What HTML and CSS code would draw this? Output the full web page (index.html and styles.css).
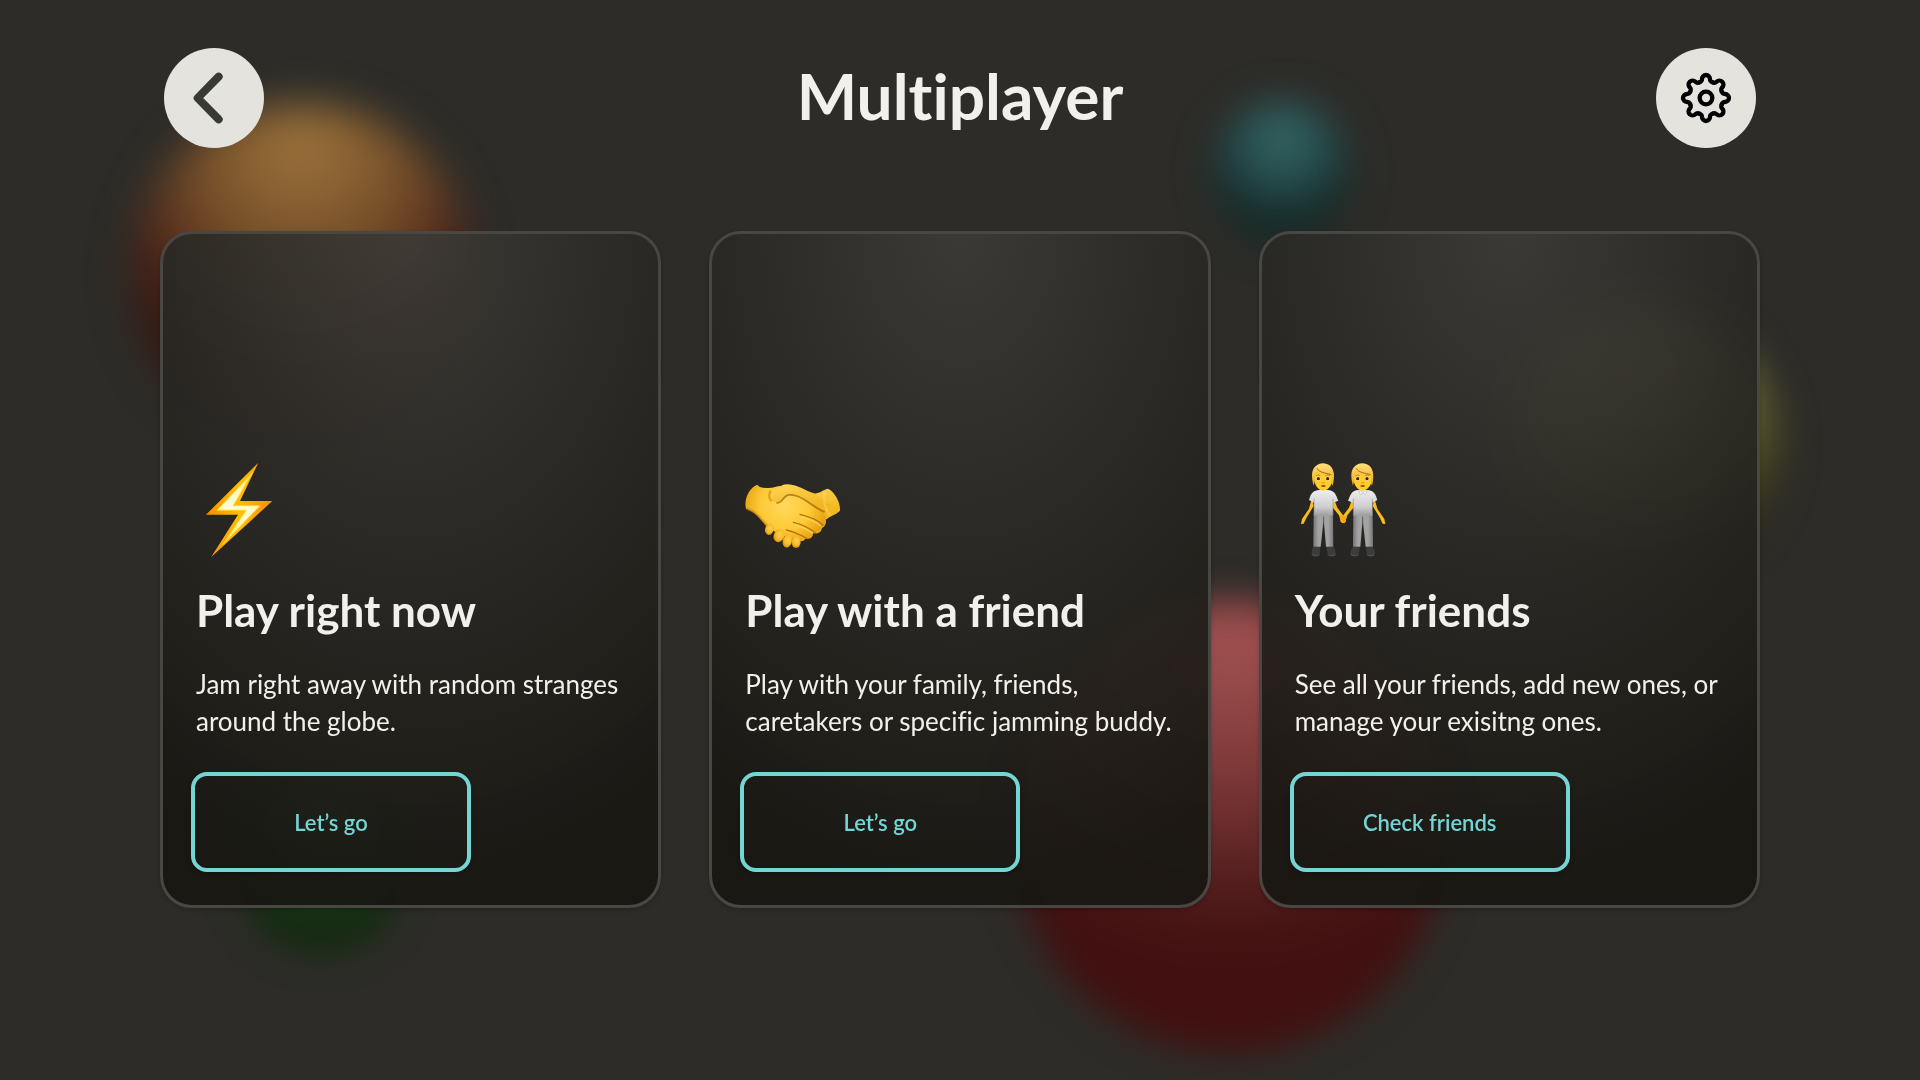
FILE: index.html
```html
<!DOCTYPE html>
<html lang="en">
<head>
<meta charset="utf-8">
<meta name="viewport" content="width=device-width, initial-scale=1">
<title>Multiplayer</title>
<link rel="stylesheet" href="styles.css">
</head>
<body>
<div class="backdrop" aria-hidden="true">
  <span class="orb orb-orange"></span>
  <span class="orb orb-teal"></span>
  <span class="orb orb-olive"></span>
  <span class="orb orb-green"></span>
  <span class="orb orb-red"></span>
</div>

<div class="page">
  <header class="topbar">
    <button class="round-button" type="button" aria-label="Back">
      <svg viewBox="0 0 300 300" aria-hidden="true"><path d="M164 86 101 150 164 214" fill="none" stroke="#3a3a35" stroke-width="24" stroke-linecap="round" stroke-linejoin="round"/></svg>
    </button>
    <h1 class="page-title">Multiplayer</h1>
    <button class="round-button" type="button" aria-label="Settings">
      <svg viewBox="-150 -150 300 300" aria-hidden="true">
        <defs><path id="tooth" d="M-19.500-47.100C-13-49.800-12-51-12-57A12 12 0 0 1 12-57C12-51 13-49.800 19.500-47.100"/></defs>
        <g fill="none" stroke="#000" stroke-width="13" stroke-linecap="round">
          <use href="#tooth"/><use href="#tooth" transform="rotate(45)"/><use href="#tooth" transform="rotate(90)"/><use href="#tooth" transform="rotate(135)"/>
          <use href="#tooth" transform="rotate(180)"/><use href="#tooth" transform="rotate(225)"/><use href="#tooth" transform="rotate(270)"/><use href="#tooth" transform="rotate(315)"/>
          <circle r="19"/>
        </g>
      </svg>
    </button>
  </header>

  <main class="cards">
    <section class="card">
      <svg class="card-icon" viewBox="18 36 288 288" aria-hidden="true">
        <defs>
          <linearGradient id="bolt" x1="0" x2="1"><stop offset="0" stop-color="#ff8a00"/><stop offset=".5" stop-color="#ffbd08"/><stop offset="1" stop-color="#ff8d08"/></linearGradient>
          <linearGradient id="bolt-core" x1="0" y1="0" x2="0" y2="1"><stop offset="0" stop-color="#ffe24a"/><stop offset=".35" stop-color="#fffbd8"/><stop offset=".7" stop-color="#fff9c4"/><stop offset="1" stop-color="#ffd92e"/></linearGradient>
        </defs>
        <path d="M205 38 48 194H144L63 322 247 153H150Z" fill="url(#bolt)"/>
        <path d="M188 67 81 181H168L98 284 210 167H130Z" fill="url(#bolt-core)" stroke="#ffd51f" stroke-width="3"/>
      </svg>
      <h2 class="card-title">Play right now</h2>
      <p class="card-text">Jam right away with random stranges around the globe.</p>
      <button class="action" type="button">Let’s go</button>
    </section>

    <section class="card">
      <svg class="card-icon" viewBox="45 -24 288 288" aria-hidden="true">
        <defs>
          <radialGradient id="palm" gradientUnits="userSpaceOnUse" cx="165" cy="105" r="125"><stop offset="0" stop-color="#ffd95c"/><stop offset=".6" stop-color="#fdc936"/><stop offset="1" stop-color="#e6a313"/></radialGradient>
          <linearGradient id="wrist" x1="0" y1="0" x2=".4" y2="1"><stop offset="0" stop-color="#ffd65a"/><stop offset="1" stop-color="#f2b51c"/></linearGradient>
          <radialGradient id="tip" cx=".55" cy=".4" r=".65"><stop offset="0" stop-color="#ffd14a"/><stop offset=".6" stop-color="#f6b92a"/><stop offset="1" stop-color="#c97f08"/></radialGradient>
          <filter id="soft"><feGaussianBlur stdDeviation="2"/></filter>
        </defs>
        <path d="M130 53C148 46 170 48 190 49L250 71C268 71 280 59 293 56C313 62 333 100 330 122C316 136 302 136 290 148L250 150Z" fill="url(#wrist)"/>
        <path d="M82 44C90 55 104 56 142 51L180 44 240 88 282 132C292 148 290 168 276 174C274 188 262 193 249 190C250 204 238 209 226 206C220 216 212 214 205 211L150 195 112 171C92 150 82 128 48 116C41 92 56 52 82 44Z" fill="url(#palm)"/>
        <path d="M50 116C82 126 92 148 114 169M122 62C116 72 116 82 124 94" fill="none" stroke="#b87308" stroke-width="7" opacity=".45" filter="url(#soft)"/>
        <ellipse cx="118" cy="178" rx="13" ry="17" fill="url(#tip)" transform="rotate(12 118 178)"/>
        <ellipse cx="147" cy="197" rx="16" ry="20" fill="url(#tip)" transform="rotate(25 147 197)"/>
        <ellipse cx="172" cy="213" rx="14" ry="20" fill="url(#tip)" transform="rotate(12 172 213)"/>
        <ellipse cx="198" cy="216" rx="14" ry="18" fill="url(#tip)"/>
        <path d="M139 98C158 101 160 76 176 74C216 72 238 106 284 126" fill="none" stroke="#9c5c00" stroke-width="6" opacity=".65" filter="url(#soft)"/>
        <path d="M252 70C226 64 206 44 172 43C145 43 147 62 132 76C122 86 124 96 139 97C158 95 156 76 171 72C204 64 244 102 282 120L302 105Z" fill="url(#wrist)"/>
        <path d="M210 133C236 141 260 146 279 166M190 157C218 164 238 174 256 188M169 180C194 185 212 196 231 205" fill="none" stroke="#b77506" stroke-width="4" stroke-linecap="round"/>
        <path d="M212 139C238 148 257 153 272 168M194 164C218 171 234 180 249 190" fill="none" stroke="#ffdb69" stroke-width="4" opacity=".7"/>
        <path d="M284 66C278 86 284 116 300 136" fill="none" stroke="#ffe07a" stroke-width="8" opacity=".35" filter="url(#soft)"/>
      </svg>
      <h2 class="card-title">Play with a friend</h2>
      <p class="card-text">Play with your family, friends, caretakers or specific jamming buddy.</p>
      <button class="action" type="button">Let’s go</button>
    </section>

    <section class="card">
      <svg class="card-icon" viewBox="42 48 288 288" aria-hidden="true">
        <defs>
          <linearGradient id="shirt" x1="0" y1="0" x2="0" y2="1"><stop offset="0" stop-color="#eeeeef"/><stop offset=".65" stop-color="#cfcfd1"/><stop offset="1" stop-color="#9e9e9f"/></linearGradient>
          <linearGradient id="trousers" x1="0" x2="1"><stop offset="0" stop-color="#777"/><stop offset=".25" stop-color="#a3a3a3"/><stop offset=".75" stop-color="#a3a3a3"/><stop offset="1" stop-color="#777"/></linearGradient>
          <linearGradient id="hair" x1="0" y1="0" x2="0" y2="1"><stop offset="0" stop-color="#ffe07a"/><stop offset="1" stop-color="#f0a51b"/></linearGradient>
          <g id="body">
            <path d="M93 155 84 188 63 219 60 234 68 233 76 216 98 180ZM158 155 169 185 190 213 195 226 189 232 179 225 174 208 151 179Z" fill="#fbbd1c"/>
            <path d="M97 302C90 315 88 331 101 331C116 331 119 322 117 302ZM137 302C136 321 143 331 157 330C169 328 164 312 157 302Z" fill="#3c3c3d"/>
            <path d="M94 326C101 331 110 331 116 325M139 325C147 331 158 331 164 325" fill="none" stroke="#666" stroke-width="2"/>
            <path d="M98 204H156L157 302H135L128 220 119 302H97Z" fill="url(#trousers)"/>
            <path d="M128 212V232" stroke="#5f5f5f" stroke-width="3"/>
            <path d="M104 134C114 130 142 130 151 134C165 139 167 154 172 164L157 170 155 209H99V170L84 162C88 149 91 138 104 134Z" fill="url(#shirt)"/>
            <path d="M99 158V207M156 158V207" stroke="#8d8d8f" stroke-width="3" opacity=".6"/>
          </g>
          <g id="head">
            <path d="M97 80C97 112 108 132 126 134C146 132 158 111 158 80Z" fill="#ffcc2e"/>
            <path d="M98 119C88 87 91 57 124 52C156 52 165 80 155 119C150 112 153 98 150 87C134 88 116 86 106 80C101 90 102 108 98 119Z" fill="url(#hair)"/>
            <path d="M108 67C114 80 134 81 151 86" fill="none" stroke="#a8680f" stroke-width="3"/>
            <circle cx="112" cy="98" r="6" fill="#fff"/><circle cx="140" cy="98" r="6" fill="#fff"/>
            <circle cx="112" cy="98" r="5" fill="#3b260c"/><circle cx="140" cy="98" r="5" fill="#3b260c"/>
            <path d="M105 89Q112 85 118 89M134 89Q141 85 147 89" fill="none" stroke="#a86a0d" stroke-width="2"/>
            <path d="M123 109Q127 113 131 109" fill="none" stroke="#d9900f" stroke-width="3"/>
            <ellipse cx="127" cy="120" rx="7" ry="3" fill="#a14b12"/>
          </g>
        </defs>
        <use href="#body"/>
        <use href="#head"/>
        <use href="#body" transform="translate(373 0) scale(-1 1)"/>
        <use href="#head" transform="translate(118 0)"/>
        <path d="M176 209C178 218 184 226 189 232C196 228 196 216 193 209Z" fill="#f1a617"/>
        <path d="M233 133 246 139 259 133 254 146 246 141 238 146Z" fill="#f6f6f6" stroke="#b9b9bb" stroke-width="2"/>
      </svg>
      <h2 class="card-title">Your friends</h2>
      <p class="card-text">See all your friends, add new ones, or manage your exisitng ones.</p>
      <button class="action" type="button">Check friends</button>
    </section>
  </main>
</div>
</body>
</html>
```
FILE: styles.css
```css
* {
  box-sizing: border-box;
}

body {
  margin: 0;
  min-height: 100vh;
  background: #2d2c28;
  color: #f2f0ec;
  font-family: Lato, "Noto Sans", sans-serif;
  font-variant-ligatures: none;
}

button {
  font: inherit;
  cursor: pointer;
}

/* Blurred colour orbs behind the content */
.backdrop {
  position: fixed;
  inset: 0;
  overflow: hidden;
}

.orb {
  position: absolute;
  border-radius: 50%;
}

.orb-orange {
  left: 132px;
  top: 104px;
  width: 340px;
  height: 340px;
  background: radial-gradient(circle at 50% 12%, #9c733b 0, #7f572d 25%, #633c22 42%, #4a2118 54%, #341812 68%);
  filter: blur(20px);
}

.orb-teal {
  left: 1212px;
  top: 100px;
  width: 140px;
  height: 146px;
  background: radial-gradient(circle at 50% 26%, #376a6a 0, #234848 38%, #152826 66%);
  filter: blur(18px);
}

.orb-olive {
  left: 1510px;
  top: 310px;
  width: 270px;
  height: 270px;
  background: radial-gradient(circle at 50% 14%, #8c8a58 0, #5f5d30 45%, #2b2611 80%);
  filter: blur(18px);
}

.orb-green {
  left: 236px;
  top: 786px;
  width: 170px;
  height: 170px;
  background: radial-gradient(circle at 50% 14%, #3f6b3d 0, #1d3d1a 40%, #152a12 70%);
  filter: blur(16px);
}

.orb-red {
  left: 1012px;
  top: 600px;
  width: 436px;
  height: 452px;
  background: radial-gradient(circle at 50% 10%, #a25252 0, #7a3636 30%, #4e1a1a 55%, #421010 68%);
  filter: blur(18px);
}

.page {
  position: relative;
  padding: 48px 8.333% 48px;
}

.topbar {
  display: flex;
  align-items: center;
  justify-content: space-between;
  padding: 0 4px;
  margin-bottom: 83px;
}

.round-button {
  flex: none;
  width: 100px;
  height: 100px;
  padding: 0;
  border: 0;
  border-radius: 50%;
  background: #e4e3de;
}

.round-button svg {
  display: block;
  width: 100%;
}

.page-title {
  margin: 0;
  padding-bottom: 4px;
  font-size: 64px;
  font-weight: 700;
  line-height: 80px;
}

.cards {
  display: grid;
  grid-template-columns: repeat(3, minmax(0, 1fr));
  gap: 48px;
}

.card {
  display: flex;
  flex-direction: column;
  padding: 228px 28px 33px;
  border: 3px solid #484742;
  border-radius: 32px;
  background: radial-gradient(ellipse 100% 100% at 50% 0, rgba(61, 59, 55, 0.92) 0, rgba(41, 40, 36, 0.92) 50%, rgba(24, 23, 18, 0.94) 100%) padding-box;
  backdrop-filter: blur(16px);
  box-shadow: 0 2px 4px rgba(0, 0, 0, 0.2);
}

.card-icon {
  width: 96px;
  height: 96px;
  margin: 0 0 20px 5px;
}

.card-title {
  margin: 0 5px 24px;
  font-size: 44px;
  font-weight: 700;
  line-height: 64px;
}

.card-text {
  margin: 0 0 32px 5px;
  min-height: 74px;
  font-size: 26px;
  line-height: 37px;
}

.action {
  width: 280px;
  max-width: 100%;
  height: 100px;
  border: 4px solid #74d5d4;
  border-radius: 16px;
  background: transparent;
  color: #74d5d4;
  font-size: 22px;
  font-weight: 600;
  box-shadow: 0 2px 4px rgba(0, 0, 0, 0.25);
}
```
